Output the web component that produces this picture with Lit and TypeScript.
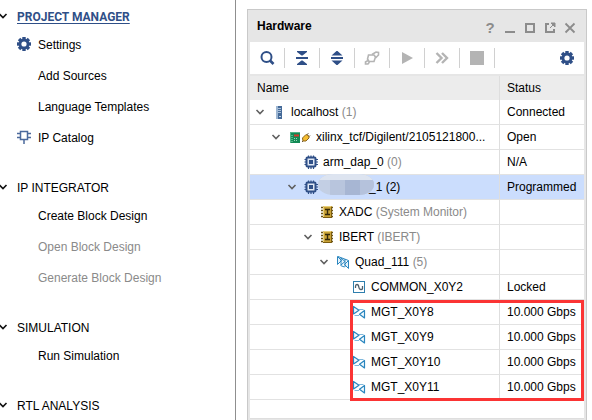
import { LitElement, html, css, svg, nothing, type TemplateResult } from "lit";
import { customElement, property } from "lit/decorators.js";
import { classMap } from "lit/directives/class-map.js";
import { styleMap } from "lit/directives/style-map.js";

const NAVY = "#2f4f87";
const GREY = "#b4b4b4";
const BLUE = "#2a86bf";

// Eight-toothed cog on a 16x16 grid
const gear = svg`
  <g fill=${NAVY}>
    <circle cx="8" cy="8" r="5.4"/>
    ${[0, 45, 90, 135].map((a) => svg`<rect x="6.3" y="1" width="3.4" height="14" transform="rotate(${a} 8 8)"/>`)}
  </g>
  <circle cx="8" cy="8" r="2.6" fill="#fff"/>`;

const chip = svg`
  <g stroke=${NAVY} fill="none">
    <rect x="3.5" y="3.5" width="9" height="9" rx="1" stroke-width="2" fill="#dfe7f3"/>
    <rect x="6" y="6" width="4" height="4" fill=${NAVY} stroke="none"/>
    <path d="M5.5 1.5V3M8 1.5V3M10.5 1.5V3M5.5 13v2M8 13v2M10.5 13v2M1.5 5.5H3M1.5 8H3M1.5 10.5H3M13 5.5h2M13 8h2M13 10.5h2" stroke-width="1.2"/>
  </g>`;

const core = svg`
  <path d="M2 3.5h12M2 6.5h12M2 9.5h12M2 12.5h12" stroke="#6b5416" stroke-width="1.4"/>
  <rect x="4" y="2" width="9" height="12" fill="#c9a236"/>
  <path d="M4.5 14V2.5H12" stroke="#e8cf7a" fill="none"/>
  <path d="M4 13.5h9M12.5 3v11" stroke="#7a5c12" fill="none"/>
  <path d="M6 5.5h5M6 10.5h5M8.5 5v6" stroke="#33280a" stroke-width="1.4" fill="none"/>`;

const SHAPES: Record<string, TemplateResult> = {
  gear,
  chip,
  core,
  ip: svg`<path d="M4.5 2.5h7v8h-7zM1 4.5h3.5M1 8.5h3.5M11.5 4.5H15M11.5 8.5H15M8 11v4" stroke="#4b699c" stroke-width="1.5" fill="none"/>`,
  server: svg`
    <path d="M5 2h6v13H5z" fill="#456a98"/>
    <path d="M5 2h2v13H5z" fill="#9db6d2"/>
    <path d="M7 4.5h3M7 6.5h3M7 8.5h3" stroke="#a9c0da"/>
    <path d="M8 12h2v1H8z" fill="#c5d8ea"/>`,
  transceiver: svg`
    <path d="M2.5 2.500v7.500L8 6.200zM13.500 6.500v7.500L8.500 10.300z" fill="#f2f9fd" stroke=${BLUE} stroke-width="1.200" stroke-linejoin="round"/>
    <path d="M8 5.500h4.500M3.500 11.500H8" stroke="#7fb8dc"/>`,
  quad: svg`
    <path d="M2.500 2.500v8L6.500 6.500zM6 4v7l4-3.500zM13.500 6.500v8L9.500 10.500z" stroke=${BLUE} fill="#e4f1fa" stroke-linejoin="round"/>
    <path d="M3 2.500l10.500 4M10 5v8M5.500 11.500l4 1.500" stroke=${BLUE} fill="none"/>`,
  wave: svg`
    <rect x="2.500" y="2.500" width="11" height="11" fill="#fff" stroke="#2f7fae"/>
    <path d="M4.500 9V7.500Q4.500 5.500 6 5.500T7.800 8T10 10.500T11.500 8.500V7" fill="none" stroke="#4d5f6b" stroke-width="1.300"/>`,
  search: svg`<circle cx="7.500" cy="7" r="5" fill="none" stroke=${NAVY} stroke-width="2"/><path d="M11 10.500l3.500 3.500" stroke=${NAVY} stroke-width="2.600"/>`,
  collapse: svg`<path d="M3 1h10v1L8.500 5.500h-1L3 2zM2 7h12v2H2zM3 15h10v-1L8.500 10.500h-1L3 14z" fill=${NAVY}/>`,
  expand: svg`<path d="M2.500 5.500L7.500 1h1L13.500 5.500zM2 7h12v2H2zM2.500 10.500L7.500 15h1L13.500 10.500z" fill=${NAVY}/>`,
  plug: svg`
    <path d="M4.500 5h5.500l1.500 2-1.500 4.500H5L3.500 9z" fill="none" stroke=${GREY} stroke-width="1.600"/>
    <path d="M8 4.500l4-2.500 2.500.5V5l-3 3M4 10.500l-2.500 1.500v2H4l1.500-2" fill="none" stroke=${GREY} stroke-width="1.600"/>`,
  play: svg`<path d="M3 2l11 6-11 6z" fill=${GREY}/>`,
  forward: svg`<path d="M2.500 3L7.500 8l-5 5M8 3l5 5-5 5" fill="none" stroke=${GREY} stroke-width="2.400"/>`,
  stop: svg`<path d="M1 1h14v14H1z" fill=${GREY}/>`,
  minimize: svg`<path d="M3 12h10" stroke="#8c8c8c" stroke-width="2"/>`,
  maximize: svg`<path d="M4 4h8v8H4z" fill="none" stroke="#8c8c8c" stroke-width="2"/>`,
  float: svg`<path d="M7 4H4v8h8V9" fill="none" stroke="#8c8c8c" stroke-width="2"/><path d="M9 3h4v4zM8 8L12 4" fill="#8c8c8c" stroke="#8c8c8c"/>`,
  close: svg`<path d="M3.500 3.500l9 9M12.500 3.500l-9 9" stroke="#8c8c8c" stroke-width="1.800"/>`,
};

const icon = (name: string) =>
  html`<svg class="icon" viewBox="0 0 16 16" width="16" height="16" aria-hidden="true">${SHAPES[name]}</svg>`;

const boardIcon = html`<svg class="icon" viewBox="0 0 25 16" width="25" height="16" aria-hidden="true">
  <rect x="3" y="3" width="10" height="11" fill="#128a55"/>
  <path d="M3 3.500h10M3.500 3v11" stroke="#4fb385"/>
  <path d="M7 6.500h5" stroke="#d33b2c" stroke-width="2"/>
  <path d="M5 6v7M7 9.500h4M7 11.500h4" stroke="#9bd8b9" stroke-dasharray="1 1"/>
  <path d="M15.500 9L19 5.500 22 7v2l-3 3h-3z" fill="#f5bd30" stroke="#8b641b"/>
  <path d="M20 5.500l1.500-1M22 7.500L23 6.500M16 12l-1 1" stroke="#6b5634"/>
</svg>`;

const chevron = (color: string) =>
  html`<svg class="chev" viewBox="0 0 12 12" width="12" height="12" aria-hidden="true">
    <path d="M2.500 4L6 7.500 9.500 4" fill="none" stroke=${color} stroke-width="1.600" />
  </svg>`;

interface NavItem { label: string; icon?: string; disabled?: boolean }
interface NavSection { title: string; active?: boolean; items: NavItem[] }

const SECTIONS: NavSection[] = [
  {
    title: "PROJECT MANAGER",
    active: true,
    items: [
      { label: "Settings", icon: "gear" },
      { label: "Add Sources" },
      { label: "Language Templates" },
      { label: "IP Catalog", icon: "ip" },
    ],
  },
  {
    title: "IP INTEGRATOR",
    items: [
      { label: "Create Block Design" },
      { label: "Open Block Design", disabled: true },
      { label: "Generate Block Design", disabled: true },
    ],
  },
  { title: "SIMULATION", items: [{ label: "Run Simulation" }] },
  { title: "RTL ANALYSIS", items: [] },
];

@customElement("flow-navigator")
class FlowNavigator extends LitElement {
  static styles = css`
    :host {
      display: block;
      box-sizing: border-box;
      padding-top: 4px;
      border-right: 1px solid #8f8f8f;
      overflow: hidden;
    }
    section { margin-bottom: 22px; }
    .head { display: flex; align-items: center; height: 25px; margin: 0; font-size: 12px; font-weight: 400; }
    .chev { flex: none; margin: -2px 8px 0 -3px; }
    .head a { color: #000; text-decoration: none; }
    .head a.active {
      color: #2f4f87;
      font-family: Roboto, "Liberation Sans", sans-serif;
      font-weight: 700;
      text-decoration: underline;
      text-underline-offset: 2px;
    }
    ul { list-style: none; margin: 0; padding: 0; }
    button {
      display: flex;
      align-items: center;
      gap: 6px;
      width: 100%;
      height: 31px;
      padding: 0 0 0 16px;
      border: 0;
      background: none;
      font: inherit;
      color: #000;
      text-align: left;
    }
    button:disabled { color: #8a8a8a; }
    .slot { flex: none; width: 16px; height: 18px; }
    .icon { display: block; }
  `;

  render() {
    return html`<nav aria-label="Flow Navigator">
      ${SECTIONS.map(
        (s) => html`<section>
          <h2 class="head">
            ${chevron("#111")}<a href="#" class=${classMap({ active: !!s.active })}>${s.title}</a>
          </h2>
          <ul>
            ${s.items.map(
              (i) => html`<li>
                <button ?disabled=${!!i.disabled}>
                  <span class="slot">${i.icon ? icon(i.icon) : nothing}</span>${i.label}
                </button>
              </li>`
            )}
          </ul>
        </section>`
      )}
    </nav>`;
  }
}

interface Device {
  depth: number;
  name: string;
  note?: string;
  icon: string;
  open?: boolean;
  status?: string;
  selected?: boolean;
  masked?: boolean;
}

const DEVICES: Device[] = [
  { depth: 0, name: "localhost", note: "(1)", icon: "server", open: true, status: "Connected" },
  { depth: 1, name: "xilinx_tcf/Digilent/2105121800...", icon: "board", open: true, status: "Open" },
  { depth: 2, name: "arm_dap_0", note: "(0)", icon: "chip", status: "N/A" },
  { depth: 2, name: "_1", note: "(2)", icon: "chip", open: true, status: "Programmed", selected: true, masked: true },
  { depth: 3, name: "XADC", note: "(System Monitor)", icon: "core" },
  { depth: 3, name: "IBERT", note: "(IBERT)", icon: "core", open: true },
  { depth: 4, name: "Quad_111", note: "(5)", icon: "quad", open: true },
  { depth: 5, name: "COMMON_X0Y2", icon: "wave", status: "Locked" },
  ...[8, 9, 10, 11].map((n) => ({ depth: 5, name: `MGT_X0Y${n}`, icon: "transceiver", status: "10.000 Gbps" })),
];

const TOOLS: [string, string, boolean][] = [
  ["search", "Search", false],
  ["collapse", "Collapse All", false],
  ["expand", "Expand All", false],
  ["plug", "Auto Connect", true],
  ["play", "Run Trigger", true],
  ["forward", "Run Trigger Immediate", true],
  ["stop", "Stop Trigger", true],
];

@customElement("hardware-panel")
class HardwarePanel extends LitElement {
  @property({ attribute: false }) devices: Device[] = DEVICES;

  static styles = css`
    :host {
      display: block;
      box-sizing: border-box;
      border: 1px solid #c9c9c9;
      border-bottom: 0;
      padding: 0 2px;
      background: #e6e6e6;
    }
    button { padding: 0; border: 0; background: none; display: grid; place-items: center; font: inherit; }
    .icon { display: block; flex: none; }
    .title { display: flex; align-items: center; height: 32px; padding: 0 4px 0 7px; }
    .title h1 { flex: 1; margin: 0; font-size: 12px; font-weight: 700; }
    .title button { width: 20px; height: 20px; margin-top: 4px; }
    .title .help { font-size: 15px; font-weight: 700; color: #8c8c8c; }
    .tools { display: flex; align-items: center; height: 32px; background: #fff; padding-right: 9px; }
    .tools button { width: 34px; height: 20px; border-right: 1px solid #d0d0d0; box-sizing: content-box; }
    .tools .settings { margin-left: auto; width: 16px; border: 0; }
    .list { position: relative; margin-top: 2px; background: #fff; border-bottom: 1px solid #dedede; padding-bottom: 18px; }
    table { width: 100%; border-collapse: separate; border-spacing: 0; table-layout: fixed; }
    th, td { box-sizing: border-box; padding: 0; font-weight: 400; text-align: left; white-space: nowrap; }
    th { height: 24px; background: #ececec; padding-left: 7px; }
    td { height: 25px; border-bottom: 1px solid #e2e2e2; }
    .status { width: 85px; padding-left: 7px; border-left: 1px solid #dedede; }
    tr.selected td { background: #cbddfd; }
    .cell { display: flex; align-items: center; height: 24px; }
    .chev { flex: none; margin-right: 5px; }
    .gap { flex: none; width: 17px; }
    .text { margin-left: 4px; }
    .note { color: #8a8a8a; }
    .selected .note { color: #000; }
    .masked { position: relative; padding-left: 46px; }
    .mask { position: absolute; left: -5px; top: -6px; z-index: 1; }
    .frame {
      position: absolute;
      box-sizing: border-box;
      top: 224px;
      left: 100px;
      right: 0;
      height: 101px;
      border: 3px solid #fb3434;
      pointer-events: none;
    }
  `;

  private mask() {
    return html`<svg class="mask" viewBox="0 0 56 21" width="56" height="21" aria-hidden="true">
      <defs><clipPath id="blob"><rect width="56" height="21" rx="15" ry="10" /></clipPath></defs>
      <g clip-path="url(#blob)">
        <path d="M0 0h56v21H0z" fill="#c3cfe4" />
        <path d="M0 0h56v6H0z" fill="#dde4f0" />
        <path d="M12 6h15v15H12z" fill="#b8c5dd" />
        <path d="M27 6h15v15H27z" fill="#a7b6d3" />
        <path d="M42 6h14v15H42z" fill="#b5c2dc" />
      </g>
    </svg>`;
  }

  private row(d: Device) {
    return html`<tr class=${classMap({ selected: !!d.selected })}>
      <td>
        <div class="cell" style=${styleMap({ paddingLeft: `${4 + d.depth * 16}px` })}>
          ${d.open ? chevron("#606060") : html`<span class="gap"></span>`}
          ${d.icon === "board" ? boardIcon : icon(d.icon)}
          <span class="text ${d.masked ? "masked" : ""}"
            >${d.masked ? this.mask() : nothing}${d.name}${d.note ? html` <span class="note">${d.note}</span>` : nothing}</span
          >
        </div>
      </td>
      <td class="status">${d.status ?? nothing}</td>
    </tr>`;
  }

  render() {
    return html`
      <header class="title">
        <h1>Hardware</h1>
        <button class="help" aria-label="Help">?</button>
        ${["minimize", "maximize", "float", "close"].map((n) => html`<button aria-label=${n}>${icon(n)}</button>`)}
      </header>
      <div class="tools" role="toolbar">
        ${TOOLS.map(([n, label, off]) => html`<button aria-label=${label} ?disabled=${off}>${icon(n)}</button>`)}
        <button class="settings" aria-label="Settings">${icon("gear")}</button>
      </div>
      <div class="list">
        <table>
          <thead>
            <tr><th scope="col">Name</th><th scope="col" class="status">Status</th></tr>
          </thead>
          <tbody>${this.devices.map((d) => this.row(d))}</tbody>
        </table>
        <div class="frame"></div>
      </div>
    `;
  }
}

@customElement("app-root")
class AppRoot extends LitElement {
  static styles = css`
    :host {
      display: grid;
      grid-template-columns: 236px minmax(0, 1fr);
      column-gap: 11px;
      height: 100vh;
      overflow: hidden;
      background: #fff;
      color: #000;
      font: 12px/14px "Liberation Sans", Arial, sans-serif;
    }
    hardware-panel { margin: 9px 5px 0 0; }
  `;

  render() {
    return html`<flow-navigator></flow-navigator><hardware-panel></hardware-panel>`;
  }
}
